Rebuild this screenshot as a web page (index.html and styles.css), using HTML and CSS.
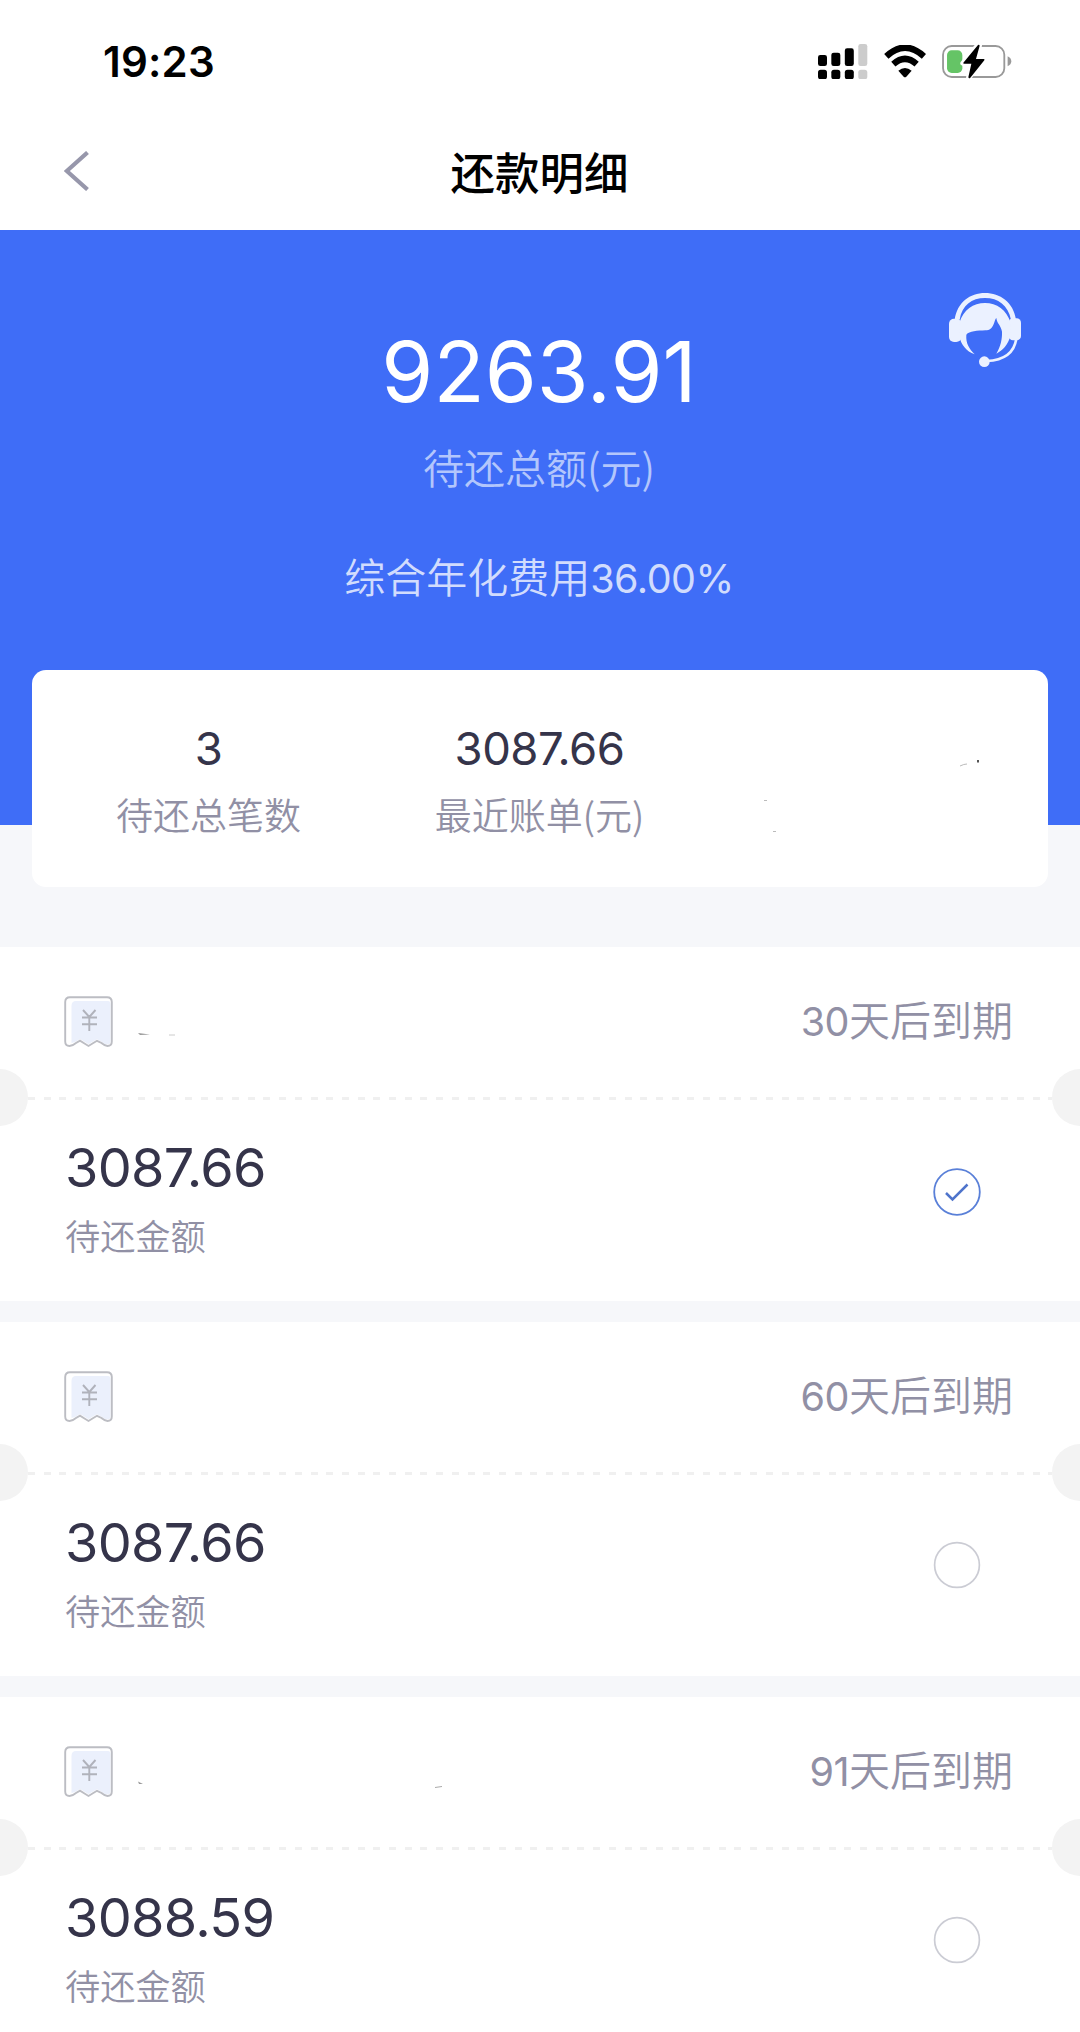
FILE: index.html
```html
<!DOCTYPE html>
<html lang="zh-CN">
<head>
    <meta charset="UTF-8">
    <meta name="viewport" content="width=device-width, initial-scale=1.0">
    <title>还款明细</title>
    <link rel="stylesheet" href="styles.css">
</head>
<body>
    <!-- Shared icons -->
    <svg class="sprite">
        <symbol id="bill-icon" viewBox="0 0 49 52">
            <path d="M6 1.2H43Q47.8 1.2 47.8 6V45.5Q47.8 50 43.5 50Q41 50 37.5 47L33 44.8L28.5 47.5L24.5 50L20.5 47.5L16 44.6L12 47Q8.5 50 5.5 50Q1.2 50 1.2 45.5V6Q1.2 1.2 6 1.2Z" fill="#fff"/>
            <path d="M12 5H44Q46.5 5 46.5 8V45Q46.5 48.5 43.5 48.5Q41 48.5 38 46L33 43.3L28 46L24.5 48.3L21 46L16 43.1L11 46L7.5 47V10Q7.5 5 12 5Z" fill="#ebf0fc"/>
            <path d="M6 1.2H43Q47.8 1.2 47.8 6V45.5Q47.8 50 43.5 50Q41 50 37.5 47L33 44.8L28.5 47.5L24.5 50L20.5 47.5L16 44.6L12 47Q8.5 50 5.5 50Q1.2 50 1.2 45.5V6Q1.2 1.2 6 1.2Z" fill="none" stroke="#bcbdc3" stroke-width="1.9"/>
            <path d="M19 14L25.3 21L31.500 14M18 21.500H33M18 28.300H33M25.300 21V35" fill="none" stroke="#b0b2bb" stroke-width="1.900"/>
        </symbol>
    </svg>

    <header class="header">
        <div class="status-bar">
            <span class="time">19:23</span>
            <div class="status-icons">
                <svg width="49.3" height="35.3" viewBox="115 70 148 106">
                    <rect x="115" y="103" width="27" height="33" rx="7"/>
                    <rect x="155" y="96" width="27" height="40" rx="7"/>
                    <rect x="195.5" y="83" width="27" height="53" rx="7"/>
                    <rect x="236" y="70" width="27" height="66" rx="7" fill="#ccc"/>
                    <rect x="115" y="147" width="27" height="29" rx="8"/>
                    <rect x="155" y="147" width="27" height="29" rx="8"/>
                    <rect x="195.5" y="147" width="27" height="29" rx="8"/>
                    <rect x="236" y="147" width="27" height="29" rx="8" fill="#ccc"/>
                </svg>
                <svg width="42.3" height="32.7" viewBox="311 73 127 98">
                    <path d="M318 107Q374 55 431 107" fill="none" stroke="#000" stroke-width="19"/>
                    <path d="M339 130Q374 99 409 130" fill="none" stroke="#000" stroke-width="19"/>
                    <path d="M354 150Q374 134 394 150L378 168Q374 172 370 168Z"/>
                </svg>
                <svg width="70" height="35.3" viewBox="486 70 210 106">
                    <rect x="489" y="76" width="184" height="93" rx="26" fill="none" stroke="#999" stroke-width="5.5"/>
                    <path d="M683 107Q694 112 694 122Q694 132 683 137Z" fill="#999"/>
                    <rect x="501" y="89" width="46" height="68" rx="14" fill="#65c466"/>
                    <path d="M594 72L548 128H571L565 173L614 117H590L599 74Z" stroke="#fff" stroke-width="14" stroke-linejoin="round"/>
                    <path d="M594 73L550 126Q549 129 552 129H574L565 170Q567 175 571 171L613 119Q615 115 611 115H588L599 75Q598 71 594 73Z"/>
                </svg>
            </div>
        </div>
        <div class="nav-bar">
            <svg class="back" width="26" height="40" viewBox="0 0 26 40">
                <path d="M23.5 1.500L2.800 20L23.500 38.500" fill="none" stroke="#9797ab" stroke-width="4.200"/>
            </svg>
            <h1 class="title">还款明细</h1>
        </div>
    </header>

    <section class="summary">
        <svg class="service" width="72" height="75" viewBox="87 68 216 225">
            <g fill="#ebf1ff">
                <path d="M104 148C112 95 150 68 195 68S280 95 288 148H273C264 105 235 83 195 83S126 105 119 148Z"/>
                <rect x="87" y="145" width="37" height="70" rx="15"/>
                <rect x="266" y="144" width="37" height="66" rx="13"/>
                <path d="M118 158C130 118 160 98 195 98S260 118 272 158V195C264 225 248 240 229 250C242 228 247 205 246 184C243 165 231 160 229 143C221 150 224 180 196 180C172 181 148 182 139 193C137 220 148 235 164 252C138 243 124 222 118 200Z"/>
                <circle cx="193" cy="274" r="16"/>
            </g>
            <path d="M289 205C283 245 255 270 200 272" fill="none" stroke="#ebf1ff" stroke-width="8"/>
        </svg>
        <p class="total">9263.91</p>
        <p class="total-label">待还总额(元)</p>
        <p class="rate">综合年化费用<span class="num">36.00%</span></p>
    </section>

    <section class="stats">
        <div class="stat">
            <p class="stat-value">3</p>
            <p class="stat-label">待还总笔数</p>
        </div>
        <div class="stat">
            <p class="stat-value">3087.66</p>
            <p class="stat-label">最近账单(元)</p>
        </div>
        <div class="stat">
            <svg width="331" height="120" viewBox="0 0 331 120">
                <path d="M255 44Q259 42 262 42" fill="none" stroke="#bbb" stroke-width="1"/>
                <rect x="272" y="38" width="2" height="2.5" fill="#555"/>
                <path d="M59 78.500H62M68 109.500H71" stroke="#bbb" stroke-width="1"/>
            </svg>
        </div>
    </section>

    <main class="bills">
        <article class="bill">
            <div class="bill-head">
                <svg class="bill-icon"><use href="#bill-icon"/></svg>
                <svg class="bill-name" viewBox="0 0 320 52">
                    <path d="M1 37L13 38.5L3 39Z" fill="#999"/>
                    <path d="M32 39H38" stroke="#ccc"/>
                </svg>
                <span class="due"><span class="num">30</span>天后到期</span>
            </div>
            <div class="divider"></div>
            <div class="bill-body">
                <div>
                    <p class="amount">3087.66</p>
                    <p class="amount-label">待还金额</p>
                </div>
                <svg class="radio checked" viewBox="0 0 48 48">
                    <circle cx="24" cy="24" r="22.8" fill="none" stroke="#5a80d8" stroke-width="1.8"/>
                    <path d="M13 25L19.5 31.5L34.5 16.5" fill="none" stroke="#4f74cb" stroke-width="2.5"/>
                </svg>
            </div>
        </article>

        <article class="bill">
            <div class="bill-head">
                <svg class="bill-icon"><use href="#bill-icon"/></svg>
                <span class="due"><span class="num">60</span>天后到期</span>
            </div>
            <div class="divider"></div>
            <div class="bill-body">
                <div>
                    <p class="amount">3087.66</p>
                    <p class="amount-label">待还金额</p>
                </div>
                <svg class="radio" viewBox="0 0 48 48">
                    <circle cx="24" cy="24" r="22.4" fill="none" stroke="#cbccd4" stroke-width="1.7"/>
                </svg>
            </div>
        </article>

        <article class="bill">
            <div class="bill-head">
                <svg class="bill-icon"><use href="#bill-icon"/></svg>
                <svg class="bill-name" viewBox="0 0 320 52">
                    <path d="M1 35.5L6 38L2 38Z" fill="#999"/>
                    <path d="M298 41.5L305 40.5" stroke="#aaa"/>
                </svg>
                <span class="due"><span class="num">91</span>天后到期</span>
            </div>
            <div class="divider"></div>
            <div class="bill-body">
                <div>
                    <p class="amount">3088.59</p>
                    <p class="amount-label">待还金额</p>
                </div>
                <svg class="radio" viewBox="0 0 48 48">
                    <circle cx="24" cy="24" r="22.4" fill="none" stroke="#cbccd4" stroke-width="1.7"/>
                </svg>
            </div>
        </article>
    </main>
</body>
</html>
```
FILE: styles.css
```css
* {
    box-sizing: border-box;
}

body {
    margin: 0;
    height: 2032px;
    overflow: hidden;
    background-color: #f6f7fa;
    font-family: "Noto Sans CJK SC", sans-serif;
    font-weight: 350;
    color: #35344a;
}

p, h1 {
    margin: 0;
}

svg {
    display: block;
    flex-shrink: 0;
}

.sprite {
    width: 0;
    height: 0;
    position: absolute;
}

.num, .time, .total, .stat-value, .amount {
    font-family: Inter, sans-serif;
    font-weight: 370;
}

.num {
    font-size: 39.5px;
    letter-spacing: -0.5px;
}

/* Header */
.header {
    height: 230px;
    background-color: #fff;
}

.status-bar {
    height: 112px;
    padding: 11px 68px 0 103px;
    display: flex;
    align-items: center;
    justify-content: space-between;
}

.time {
    font-size: 42px;
    font-weight: 600;
    letter-spacing: 0.2px;
    color: #000;
}

.status-icons {
    display: flex;
    align-items: center;
    gap: 16px;
}

.nav-bar {
    height: 118px;
    padding: 0 64px;
    display: flex;
    align-items: center;
}

.title {
    flex: 1;
    margin-right: 27px;
    text-align: center;
    font-size: 44.5px;
    font-weight: 500;
    line-height: 60px;
    color: #000;
}

/* Blue summary */
.summary {
    position: relative;
    height: 595px;
    padding: 91px 2px 0 0;
    background-color: #3f6df7;
    text-align: center;
}

.service {
    position: absolute;
    top: 63px;
    right: 59px;
}

.total {
    font-size: 84px;
    line-height: 102px;
    color: #fff;
}

.total-label {
    margin-top: 13px;
    font-size: 41px;
    line-height: 60px;
    color: #b3c6fc;
}

.rate {
    margin-top: 49px;
    font-size: 41px;
    line-height: 60px;
    color: #d1dcfd;
}

/* White card over the bottom of the summary */
.stats {
    position: relative;
    display: flex;
    height: 217px;
    margin: -155px 32px 0;
    padding: 0 12px 0 11px;
    border-radius: 14px;
    background-color: #fff;
    text-align: center;
}

.stat {
    flex: 1;
    padding-top: 52px;
}

.stat-value {
    font-size: 45.5px;
    line-height: 54px;
    letter-spacing: -0.5px;
}

.stat-label {
    margin-top: 12px;
    font-size: 37px;
    line-height: 52px;
    color: #9190a5;
}

/* Bills */
.bills {
    display: flex;
    flex-direction: column;
    gap: 21px;
    margin-top: 60px;
}

.bill {
    height: 354px;
    background-color: #fff;
}

.bill-head {
    display: flex;
    align-items: center;
    height: 150px;
    padding: 0 67px 0 64px;
}

.bill-icon {
    width: 49px;
    height: 52px;
}

.bill-name {
    width: 320px;
    height: 52px;
    margin-left: 24px;
}

.due {
    margin-left: auto;
    padding-bottom: 4px;
    font-size: 41px;
    line-height: 60px;
    color: #9190a5;
}

/* Dashed line with a notch at each side */
.divider {
    height: 3px;
    margin: 0 28px;
    background: repeating-linear-gradient(to right, #f0f0f0 0, #f0f0f0 7px, transparent 7px, transparent 15.7px);
    position: relative;
}

.divider::before, .divider::after {
    content: "";
    position: absolute;
    top: -28px;
    width: 57px;
    height: 57px;
    border-radius: 50%;
    background-color: #f3f3f3;
}

.divider::before {
    left: -57px;
}

.divider::after {
    right: -57px;
}

.bill-body {
    display: flex;
    justify-content: space-between;
    padding: 35px 99px 0 65px;
}

.amount {
    font-size: 54px;
    line-height: 66px;
    letter-spacing: -0.7px;
}

.amount-label {
    margin-top: 8px;
    font-size: 35.2px;
    line-height: 52px;
    color: #9190a5;
}

.radio {
    width: 48px;
    height: 48px;
    margin-top: 31px;
}

.radio.checked {
    margin-top: 33px;
}
```
